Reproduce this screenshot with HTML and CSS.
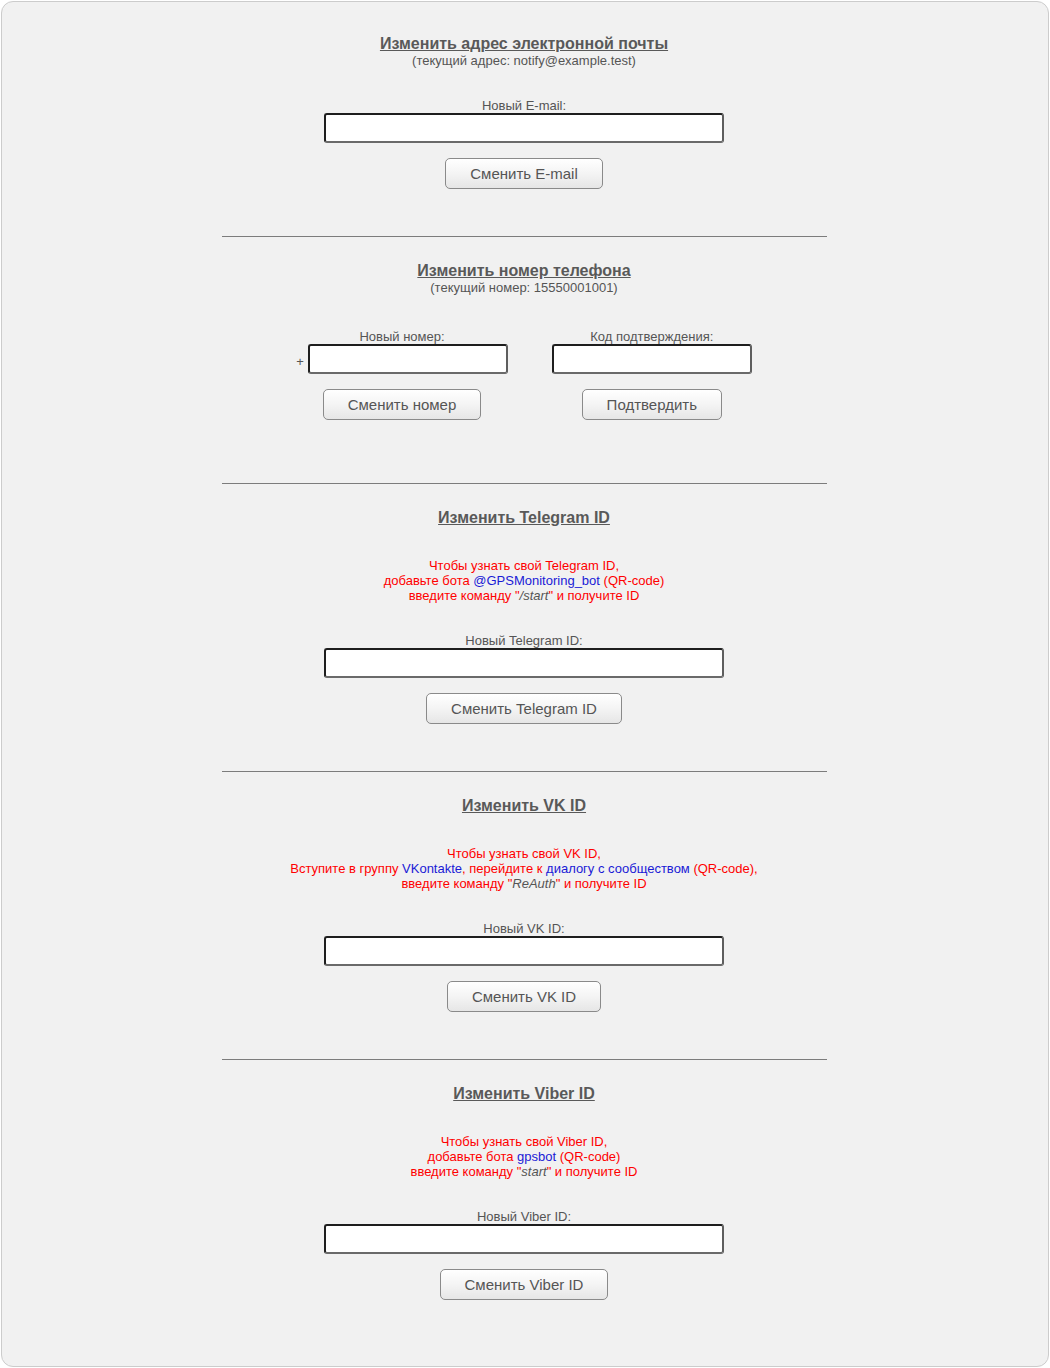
FILE: index.html
```html
<!DOCTYPE html>
<html lang="ru">
<head>
<meta charset="utf-8">
<title>Настройки</title>
<link rel="stylesheet" href="styles.css">
</head>
<body>
<div class="panel">

  <section class="sec">
    <div class="sec-title">Изменить адрес электронной почты</div>
    <div class="sec-sub">(текущий адрес: notify@example.test)</div>
    <div class="field">
      <div class="label">Новый E-mail:</div>
      <input class="inp inp-wide" type="text">
      <button class="btn" type="button">Сменить E-mail</button>
    </div>
  </section>

  <hr class="sep">

  <section class="sec">
    <div class="sec-title">Изменить номер телефона</div>
    <div class="sec-sub">(текущий номер: 15550001001)</div>
    <div class="phone-grid">
      <div class="phone-col">
        <div class="label">Новый номер:</div>
        <div class="phone-row"><span class="plus">+</span><input class="inp inp-narrow" type="text"></div>
        <button class="btn" type="button">Сменить номер</button>
      </div>
      <div class="phone-col">
        <div class="label">Код подтверждения:</div>
        <div class="phone-row"><input class="inp inp-narrow" type="text"></div>
        <button class="btn" type="button">Подтвердить</button>
      </div>
    </div>
  </section>

  <hr class="sep sep-phone">

  <section class="sec">
    <div class="sec-title">Изменить Telegram ID</div>
    <div class="note">
      Чтобы узнать свой Telegram ID,<br>
      добавьте бота <a class="lnk" href="#">@GPSMonitoring_bot</a> (QR-code)<br>
      введите команду "<i class="cmd">/start</i>" и получите ID
    </div>
    <div class="field">
      <div class="label">Новый Telegram ID:</div>
      <input class="inp inp-wide" type="text">
      <button class="btn" type="button">Сменить Telegram ID</button>
    </div>
  </section>

  <hr class="sep">

  <section class="sec">
    <div class="sec-title">Изменить VK ID</div>
    <div class="note">
      Чтобы узнать свой VK ID,<br>
      Вступите в группу <a class="lnk" href="#">VKontakte</a>, перейдите к <a class="lnk" href="#">диалогу с сообществом</a> (QR-code),<br>
      введите команду "<i class="cmd">ReAuth</i>" и получите ID
    </div>
    <div class="field">
      <div class="label">Новый VK ID:</div>
      <input class="inp inp-wide" type="text">
      <button class="btn" type="button">Сменить VK ID</button>
    </div>
  </section>

  <hr class="sep">

  <section class="sec sec-last">
    <div class="sec-title">Изменить Viber ID</div>
    <div class="note">
      Чтобы узнать свой Viber ID,<br>
      добавьте бота <a class="lnk" href="#">gpsbot</a> (QR-code)<br>
      введите команду "<i class="cmd">start</i>" и получите ID
    </div>
    <div class="field">
      <div class="label">Новый Viber ID:</div>
      <input class="inp inp-wide" type="text">
      <button class="btn" type="button">Сменить Viber ID</button>
    </div>
  </section>

</div>
</body>
</html>
```

FILE: styles.css
```css
html, body {
  margin: 0;
  padding: 0;
  background: #ffffff;
}

body {
  font-family: "Liberation Sans", Arial, sans-serif;
  color: #555555;
}

.panel {
  margin: 1px;
  min-height: 1366px;
  box-sizing: border-box;
  border: 1px solid #cccccc;
  border-radius: 12px;
  background: #f1f1f1;
  padding: 33px 2px 65px 0;
  display: flex;
  flex-direction: column;
  align-items: center;
}

.sec {
  display: flex;
  flex-direction: column;
  align-items: center;
  width: 100%;
}

.sec-title {
  font-size: 16px;
  line-height: 18px;
  font-weight: bold;
  text-decoration: underline;
  color: #595959;
}

.sec-sub {
  font-size: 13px;
  line-height: 15px;
  color: #555555;
}

.note {
  margin-top: 31px;
  font-size: 13px;
  line-height: 15px;
  color: #ff0000;
  text-align: center;
}

.lnk {
  color: #1a1ad6;
  text-decoration: none;
}

.cmd {
  color: #555555;
}

.field {
  display: flex;
  flex-direction: column;
  align-items: center;
  margin-top: 30px;
}

.label {
  font-size: 13px;
  line-height: 15px;
  color: #555555;
}

.inp {
  box-sizing: border-box;
  height: 30px;
  margin: 0;
  padding: 0 4px;
  background: #ffffff;
  border-width: 2px;
  border-style: solid;
  border-color: #1e1e1e #5e5e5e #6a6a6a #1e1e1e;
  border-radius: 3px;
  font-family: "Liberation Sans", Arial, sans-serif;
  font-size: 13px;
}

.inp-wide {
  width: 400px;
}

.inp-narrow {
  width: 200px;
}

.btn {
  box-sizing: border-box;
  height: 31px;
  margin-top: 15px;
  padding: 0 24px;
  border: 1px solid #8a8a8a;
  border-radius: 5px;
  background: linear-gradient(to bottom, #ffffff 0%, #f4f4f4 50%, #e6e6e6 100%);
  color: #555555;
  font-family: "Liberation Sans", Arial, sans-serif;
  font-size: 15px;
  cursor: pointer;
}

.sep {
  width: 605px;
  height: 0;
  margin: 47px 0 25px;
  border: 0;
  border-top: 1px solid #7c7c7c;
}

.sep-phone {
  margin-top: 63px;
}

.phone-grid {
  display: flex;
  gap: 44px;
  margin-top: 34px;
}

.phone-col {
  display: flex;
  flex-direction: column;
  align-items: center;
}

.phone-row {
  display: flex;
  align-items: center;
}

.plus {
  font-size: 13px;
  line-height: 15px;
  margin-right: 4px;
  margin-top: 5px;
  color: #555555;
}
```
